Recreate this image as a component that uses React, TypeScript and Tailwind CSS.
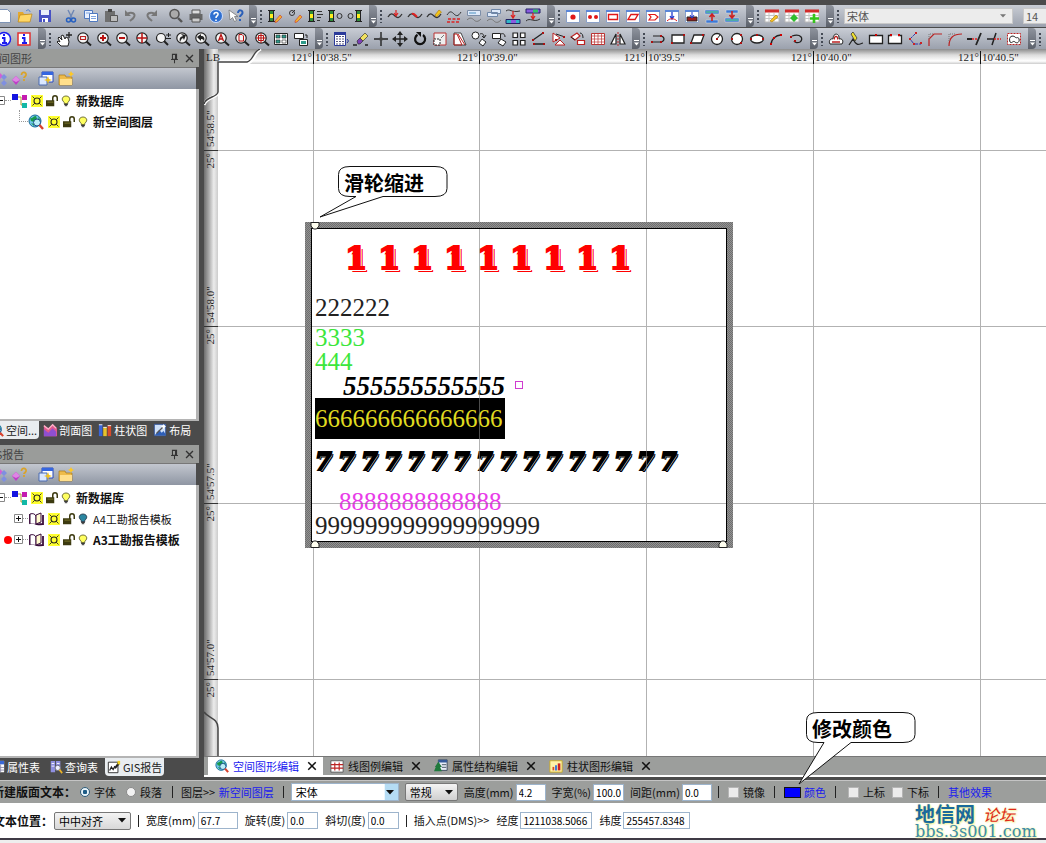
import React, { useState } from 'react';

type Icon = { label: string; art: React.ReactNode };

const Svg = ({ children, className = 'size-4' }: { children: React.ReactNode; className?: string }) => (
    <svg viewBox="0 0 16 16" className={`${className} shrink-0`} fill="none" aria-hidden="true">
        {children}
    </svg>
);

// magnifier shared by all zoom tools
const lens = (inside?: React.ReactNode) => (
    <>
        <path d="M10.5 10.5 15 14.5" stroke="#222" strokeWidth="2" />
        <circle cx="7" cy="7" r="5.2" fill="#f4f4f4" stroke="#222" strokeWidth="1.2" />
        {inside}
    </>
);

// small window frame with a blue title bar
const frame = (inside: React.ReactNode) => (
    <>
        <path d="M1.5 2.5h13v12h-13z" fill="#fff" stroke="#8aa0c8" />
        <path d="M1 2h14v2H1z" fill="#5b86d8" />
        {inside}
    </>
);

const calendar = (inside: React.ReactNode) => (
    <>
        <path d="M1 2h14v12H1z" fill="#fdfdfd" stroke="#b9b9b9" />
        <path d="M1 1.5h14v3H1z" fill="#d22b2b" />
        <path d="M1 7.5h14M1 10.5h14M5 5v9M10 5v9" stroke="#c5c5c5" />
        {inside}
    </>
);

const dots = (pts: number[][], fill = '#a11') =>
    pts.map(([x, y]) => <rect key={`${x}-${y}`} x={x - 1} y={y - 1} width="2" height="2" fill={fill} />);

const pillar = (
    <>
        <path d="M1 2.5h7M1 13.5h7" stroke="#222" />
        <path d="M3 3h3v3H3zM3 10h3v3H3z" fill="#2f8a3a" />
        <path d="M3 6h3v4H3z" fill="#ffee20" />
        <path d="M2.5 3v10M6.5 3v10" stroke="#222" />
    </>
);

const wave = <path d="M1 9c3-5 5-3 7-1s4 3 7-2" stroke="#333" strokeWidth="1.3" />;

const fileTools: Icon[] = [
    { label: '新建', art: <path d="M2.5 1.5h8l3 3v10h-11z" fill="#fff" stroke="#7d93b5" /> },
    { label: '打开', art: <><path d="M1 4h5l1 2h6v8H1z" fill="#e5a92d" /><path d="m3 7 12-1-2 8H1z" fill="#ffd766" stroke="#b98518" strokeWidth=".7" /><path d="M9 3c2-2 4-1 4 1" stroke="#4a7ed0" /></> },
    { label: '保存', art: <><path d="M2 2h12v12H2z" fill="#4751c4" /><path d="M4 2h8v5H4z" fill="#e8edfa" /><path d="M5 10h6v4H5z" fill="#fff" /><path d="M6 11h2v3H6z" fill="#4751c4" /></> },
];

const editTools: Icon[] = [
    { label: '剪切', art: <><path d="m5 2 4 8M11 2 7 10" stroke="#6d86b4" strokeWidth="1.4" /><circle cx="5.5" cy="12" r="2" stroke="#2660c0" strokeWidth="1.5" /><circle cx="10.5" cy="12" r="2" stroke="#2660c0" strokeWidth="1.5" /></> },
    { label: '复制', art: <><path d="M1.5 2.5h8v8h-8z" fill="#e8f0ff" stroke="#4f79c0" /><path d="M6.5 5.5h8v8h-8z" fill="#fff" stroke="#4f79c0" /><path d="M8 8.5h5M8 10.5h5M3 5h4" stroke="#7fa4df" /></> },
    { label: '粘贴', art: <><path d="M2 3h10v11H2z" fill="#6f6f6f" /><path d="M5 1h4v3H5z" fill="#444" /><path d="M7.5 7.5h7v6h-7z" fill="#bbb" stroke="#555" /></> },
    { label: '撤销', art: <><path d="M4 6c5-3 9 0 7 3-1 2-3 3-4 4" stroke="#777" strokeWidth="2" /><path d="M2 2v6h6z" fill="#777" /></> },
    { label: '重做', art: <><path d="M12 6c-5-3-9 0-7 3 1 2 3 3 4 4" stroke="#777" strokeWidth="2" /><path d="M14 2v6H8z" fill="#777" /></> },
];

const printTools: Icon[] = [
    { label: '预览', art: <><circle cx="6.5" cy="6" r="4.5" fill="#aaa" stroke="#555" strokeWidth="1.6" /><path d="m10 10 4 4" stroke="#555" strokeWidth="2.4" /></> },
    { label: '打印', art: <><path d="M4 2h8v4H4z" fill="#ddd" stroke="#555" /><path d="M1.5 6h13v6h-13z" fill="#666" /><path d="M4 10h8v4H4z" fill="#ccc" stroke="#555" /></> },
    { label: '帮助', art: <><circle cx="8" cy="8" r="6.5" fill="#2f6fd0" stroke="#cfe0ff" /><path d="M6 6.5c0-3 4.5-2.5 4 0C9.8 8 8 8 8 10M8 11.5V13" stroke="#fff" strokeWidth="1.6" /></> },
    { label: '这是什么', art: <><path d="m1 2 1 10 2.5-2.5 2 4 2-1-2-4H10z" fill="#fff" stroke="#777" strokeWidth=".8" /><path d="M10 5c0-4 5-3 4.5 0-.3 2-2.5 2-2.5 4M12 11v2" stroke="#2a5fb8" strokeWidth="2" /></> },
];

const pencil = <path d="m8 13 5-6 2 2-5 5-2 .5z" fill="#f0b429" stroke="#c33" strokeWidth=".6" />;

const pillarTools: Icon[] = [
    { label: '钻孔编辑', art: <>{pillar}{pencil}</> },
    { label: '样点编辑', art: <><circle cx="5" cy="5" r="2.5" stroke="#333" /><path d="m5 5 3-3" stroke="#333" />{pencil}</> },
    { label: '分层', art: <>{pillar}<path d="M10 3.5h5M10 6.5h6M10 9.5h4M10 12.5h3" stroke="#333" /></> },
    { label: '钻孔点', art: <>{pillar}<circle cx="12.5" cy="8" r="2.5" stroke="#333" /></> },
    { label: '点钻孔', art: <><circle cx="3.5" cy="8" r="2.5" stroke="#333" /><g transform="translate(7 0)">{pillar}</g></> },
];

const curveTools: Icon[] = [
    { label: '曲线加点', art: <>{wave}<path d="M9 2v6M7 5l2 3 2-3" stroke="#d22" strokeWidth="1.2" /></> },
    { label: '曲线修改', art: <>{wave}<path d="M5 6c2-1 3 1 5 3" stroke="#d22" strokeWidth="2" /></> },
    { label: '曲线绘制', art: <>{wave}<path d="m9 7 4-5 2.5 2-5 5z" fill="#f5c518" stroke="#a70" strokeWidth=".6" /></> },
    { label: '曲线填充', art: <><path d="M1 7c3-5 5-3 7-1s4 3 7-2" stroke="#333" /><path d="M2 11h13M1 14h12" stroke="#d22" strokeDasharray="3 1.5" strokeWidth="1.5" /></> },
    { label: '剖面窗口', art: <><path d="M1.5 2.5h13v5h-13z" fill="#dfeafa" stroke="#7d8ea8" /><path d="M3 5h7" stroke="#4a90c0" /><path d="M1 12c3-3 5-2 7 0s4 2 7-1" stroke="#777" /></> },
    { label: '层叠窗口', art: <><path d="M5.5 1.5h9v4h-9zM1.5 4.5h10v4h-10z" fill="#dfeafa" stroke="#6f87a8" /><path d="M1 13c3-3 5-2 7 0s4 2 7-1" stroke="#777" /></> },
    { label: '曲线到图例', art: <><path d="M1 3c4-3 5 2 14 0" stroke="#333" /><path d="M8 3v7M6 7l2 3 2-3" stroke="#d22" strokeWidth="1.3" /><path d="M1 11.5h14v4H1z" fill="#30b7c8" stroke="#226" /><path d="M6 12h5v3H6z" fill="#8a5be0" /></> },
    { label: '图例到曲线', art: <><path d="M1 1h14v4H1z" fill="#8a5be0" stroke="#226" /><path d="M8 1.5h5v3H8z" fill="#30c768" /><path d="M8 5v7M6 8l2 3 2-3" stroke="#d22" strokeWidth="1.3" /><path d="M1 13c4-4 8 2 14-2" stroke="#333" /></> },
];

const layerTools: Icon[] = [
    { label: '点', art: frame(<circle cx="8" cy="9" r="2.6" fill="#e01818" />) },
    { label: '多点', art: frame(<><circle cx="5" cy="9" r="2" fill="#e01818" /><circle cx="11" cy="9" r="2" fill="#e01818" /></>) },
    { label: '矩形', art: frame(<path d="M3.5 6.5h9v5h-9z" stroke="#e01818" strokeWidth="1.4" />) },
    { label: '平行四边形', art: frame(<path d="M6 6.5h7l-3 5H3z" stroke="#e01818" strokeWidth="1.4" />) },
    { label: '多边形', art: frame(<path d="M4 6.5h6l3 2.5-3 3H4l2-3z" stroke="#e01818" strokeWidth="1.2" />) },
    { label: '投影线', art: frame(<><path d="M8 4v7M6 8l2 3 2-3" stroke="#223ad0" strokeWidth="1.3" /><path d="M3 13c3-3 7-3 10 0" stroke="#e01818" /></>) },
    { label: '投影面', art: frame(<><path d="M3 9h10v4H3z" fill="#9b1c1c" stroke="#222" /><path d="M8 4v6M6 7l2 3 2-3" stroke="#223ad0" /></>) },
    { label: '向上对齐', art: <><path d="M1 2h14v4H1zM2 12h12v3H2z" fill="#3c79d6" stroke="#ddd" strokeWidth=".5" /><path d="M2 4h12" stroke="#5fe07c" /><path d="M8 13V7M5.5 9 8 6l2.5 3" stroke="#c22" strokeWidth="1.6" /></> },
    { label: '向下对齐', art: <><path d="M2 2h12v3H2zM1 10h14v4H1z" fill="#3c79d6" stroke="#ddd" strokeWidth=".5" /><path d="M2 12h12" stroke="#5fe07c" /><path d="M8 3v7M5.5 7 8 10l2.5-3" stroke="#c22" strokeWidth="1.6" /></> },
];

const tableTools: Icon[] = [
    { label: '编辑表', art: calendar(<path d="m6 13 6-6 2 2-6 5z" fill="#f7c325" stroke="#a70" strokeWidth=".6" />) },
    { label: '定位表', art: calendar(<path d="m10 6 4 4-4 4-4-4z" fill="#2fbf2f" />) },
    { label: '添加表', art: calendar(<path d="M10 6v9M6 10.5h9" stroke="#35c41c" strokeWidth="2.6" />) },
];

const infoTools: Icon[] = [
    { label: '信息', art: <><circle cx="8" cy="8" r="6.5" stroke="#1b1bf0" strokeWidth="1.5" fill="#fff" /><path d="M8 3v2M6 7h2.5v5M6 12h5" stroke="#1b1bf0" strokeWidth="2" /></> },
    { label: '属性', art: <><path d="M2 2h12v12H2z" fill="#fff" stroke="#e03030" strokeWidth="1.5" /><path d="M8 3v2M6 7h2.5v5M6 12h5" stroke="#1b1bf0" strokeWidth="2" /></> },
];

const zoomTools: Icon[] = [
    { label: '平移', art: <><path d="M5 15 1 11l1-1 2 1-2-4 1-1 3 3-1-4 2-1 2 4 1-2 2 1 1 4-1 4z" fill="#fff" stroke="#222" /><path d="M10 4h6M13 1v6" stroke="#222" strokeWidth="1.3" /></> },
    { label: '窗口缩放', art: lens(<path d="M4.5 5.5h5v3h-5z" stroke="#b22" strokeWidth="1.2" />) },
    { label: '放大', art: lens(<path d="M4 7h6M7 4v6" stroke="#b11" strokeWidth="2" />) },
    { label: '缩小', art: lens(<path d="M4 7h6" stroke="#b11" strokeWidth="2" />) },
    { label: '全图', art: lens(<path d="M2 7h10M7 2v10" stroke="#b11" strokeWidth="1.5" />) },
    { label: '实时缩放', art: <><circle cx="6" cy="7" r="4.5" fill="#f4f4f4" stroke="#222" strokeWidth="1.2" /><path d="m9 10 4 4" stroke="#222" strokeWidth="2" /><path d="M11 4h5M13.5 2v4M11 7.5h5" stroke="#222" /></> },
    { label: '上一视图', art: lens(<path d="M5 11c-1-4 0-5 3-6L6 3l5 1-2 5-1-2c-2 1-2 2-3 4z" fill="#222" />) },
    { label: '下一视图', art: lens(<path d="M3 6l4-3v2c3 0 4 2 3 5-1-2-2-2-3-2v2z" fill="#222" />) },
    { label: '按字缩放', art: lens(<path d="M4.5 10 7 3.5 9.5 10M5.5 8h3" stroke="#b11" strokeWidth="1.3" />) },
    { label: '页面缩放', art: lens(<path d="M5 3.5h3L9.5 5v5H5z" stroke="#b11" />) },
    { label: '中心缩放', art: lens(<path d="M2 7h10M7 2v10M4.5 4.5h5v5h-5z" stroke="#b11" />) },
    { label: '排列窗口', art: <><path d="M1.5 2.5h13v11h-13z" fill="#fff" stroke="#222" /><path d="M3 4h4v3H3zM9 4h4v3H9zM3 9h4v3H3z" fill="#2e9a8a" stroke="#222" strokeWidth=".6" /><path d="M9 9h4v3H9z" stroke="#222" strokeWidth=".6" /></> },
    { label: '切换窗口', art: <><path d="M1.5 2.5h9v5h-9z" fill="#fff" stroke="#222" /><path d="M6.5 8.5h8v6h-8z" fill="#fff" stroke="#222" /><path d="M8 10h5v3H8z" fill="#2e9a8a" /><path d="M12 4h2v3" stroke="#222" /></> },
];

const modifyTools: Icon[] = [
    { label: '图层表', art: <><path d="M1.5 1.5h11v13h-11z" fill="#fff" stroke="#2b3a9a" /><path d="M1 1h12v3H1z" fill="#2b3a9a" /><path d="M4 5v9M7 5v9M10 5v9" stroke="#225" strokeDasharray="1 1.5" strokeWidth="1.5" /><path d="m14 8 1.5 2-1.5 2" stroke="#2b3a9a" /></> },
    { label: '擦除', art: <><path d="M0 14h4M12 14h3" stroke="#222" strokeWidth="1.4" /><path d="m4 10 3-3 3 3-3 3H5z" fill="#7b3fb5" stroke="#222" strokeWidth=".6" /><path d="m7 7 5-5 3 3-5 5z" fill="#f0e060" stroke="#222" strokeWidth=".6" /></> },
    { label: '定位', art: <><path d="M8 1v14M1 8h14" stroke="#222" strokeWidth="1.4" /><path d="M6.5 6.5h3v3h-3z" fill="#444" /></> },
    { label: '移动', art: <><path d="M8 3v10M3 8h10" stroke="#222" strokeWidth="1.3" /><path d="m8 0 3 4H5zM8 16l3-4H5zM0 8l4-3v6zM16 8l-4-3v6z" fill="#222" /></> },
    { label: '旋转', art: <><path d="M5.5 3.8A5 5 0 1 0 11 4" stroke="#111" strokeWidth="2.2" /><path d="M4 1h5v5z" fill="#111" /></> },
    { label: '比例', art: <><path d="M2 2h12v12H2z" fill="#eee" stroke="#b33" /><path d="M2 8h6v6H2z" fill="#fff" stroke="#222" strokeDasharray="2 1" /><path d="m9 7 3-3" stroke="#777" /></> },
    { label: '斜切', art: <><path d="M2 2h7l5 12H2z" fill="#fff" stroke="#222" strokeWidth=".8" /><path d="M2 14V3h3l5 11zM6 3l7 11" stroke="#b22" /></> },
    { label: '复制圆', art: <><circle cx="4.5" cy="4.5" r="3.5" fill="#fff" stroke="#222" /><path d="m11 8 4 3-3 4-4-3z" fill="#fff" stroke="#222" /><path d="M9 3c2-1 4 0 4 3M11 5l2 2 2-3" stroke="#222" /></> },
    { label: '复制矩形', art: <><path d="M1.5 2.5h8v5h-8z" fill="#fff" stroke="#222" /><path d="m10 8 5 3-3 4-5-3z" fill="#fff" stroke="#222" /><path d="M10 3c2-1 4 0 4 3" stroke="#222" /></> },
    { label: '阵列', art: <path d="M2 2h4.5v4.5H2zM9.5 2H14v4.5H9.5zM2 9.5h4.5V14H2zM9.5 9.5H14V14H9.5z" fill="#fff" stroke="#222" strokeWidth="1.2" /> },
    { label: '角度', art: <><path d="M12 2 2 9M3 13h11" stroke="#222" strokeWidth="1.3" />{dots([[12, 2], [2, 9], [13, 13], [3, 13]])}</> },
    { label: '镜像点', art: <><path d="M2 2v9l7-4zM9 9l5 5H4z" fill="#fff" stroke="#b22" /><path d="m5 3 9 3" stroke="#222" />{dots([[13, 6], [5, 9]])}</> },
    { label: '对齐', art: <><path d="m1 6 6-4 3 3-5 4zM7.5 9.5h7v4h-7z" fill="#fff" stroke="#b22" strokeWidth="1.2" /><path d="M10 2c2 0 3 2 3 5M1 6l4 3" stroke="#222" /></> },
    { label: '网格', art: <><path d="M1.5 2.5h13v11h-13z" fill="#fff" stroke="#b33" /><path d="M1 5h14M1 8h14M1 11h14M4.5 2v12M8 2v12M11.5 2v12" stroke="#b33" strokeWidth=".7" /></> },
    { label: '镜像', art: <><path d="M6 3v10H1zM10 3v10h5z" fill="#fff" stroke="#222" strokeWidth="1.2" /><path d="M8 1v14" stroke="#b22" strokeDasharray="2 1" /></> },
];

const shapeTools: Icon[] = [
    { label: '折线', art: <><path d="M3 5h8c4 1 4 5 0 6H2" stroke="#222" strokeWidth="1.2" />{dots([[11, 5], [2, 11], [11, 11]])}</> },
    { label: '矩形', art: <><path d="M2 4h12v8H2z" fill="#fff" stroke="#222" strokeWidth="1.3" />{dots([[2, 12], [14, 4]])}</> },
    { label: '平行四边形', art: <><path d="M5 4h10l-3 8H2z" fill="#fff" stroke="#222" strokeWidth="1.3" />{dots([[2, 12], [14, 4]])}</> },
    { label: '圆', art: <><circle cx="8" cy="8" r="5.5" fill="#fff" stroke="#222" strokeWidth="1.3" /><path d="m8 8 3-4" stroke="#222" />{dots([[8, 8]])}</> },
    { label: '三点圆', art: <><circle cx="8" cy="8" r="5.5" fill="#fff" stroke="#222" strokeWidth="1.3" />{dots([[3, 8], [12, 4], [12, 12]])}</> },
    { label: '椭圆', art: <><ellipse cx="8" cy="8" rx="6.5" ry="4" fill="#fff" stroke="#222" strokeWidth="1.3" />{dots([[2, 8], [14, 8], [8, 4]])}</> },
    { label: '圆弧', art: <><path d="M3 14c0-6 5-10 10-10" stroke="#222" strokeWidth="1.3" />{dots([[3, 13], [6, 7], [13, 4]], '#c00')}</> },
    { label: '椭圆弧', art: <><path d="M4 5c9-3 12 3 8 6-2 1-5 1-6-1" stroke="#222" strokeWidth="1.3" />{dots([[3, 6], [7, 10]])}</> },
];

const regionTools: Icon[] = [
    { label: '偏移', art: <><path d="M2 13c-2-3 1-6 3-5 0-7 7-6 6 0 3-1 5 2 3 5z" fill="#fff" stroke="#222" /><path d="M4 11h8M6.5 8.5c-1-4 4-4 3 0" stroke="#b22" strokeWidth="1.3" /></> },
    { label: '画笔', art: <><path d="M1 14 5 8c4 8 6 5 10 4" stroke="#222" strokeWidth="1.2" /><path d="m5 1 4 6-2 3-4-7z" fill="#f0e030" stroke="#222" strokeWidth=".7" /></> },
    { label: '闭合', art: <><path d="M1.5 4.5h13v8h-13z" fill="#fff" stroke="#222" strokeWidth="1.3" />{dots([[8, 4]], '#c00')}</> },
    { label: '打开区域', art: <><path d="M5 4.5H1.5v8h13v-8H11" fill="#fff" stroke="#222" strokeWidth="1.3" />{dots([[4, 4], [12, 4]], '#c00')}</> },
    { label: '节点', art: <><path d="M9 2 3 8l4 5h7" stroke="#33a" strokeDasharray="4 1" />{dots([[9, 2], [3, 8], [7, 13], [14, 12]], '#c22')}</> },
    { label: '倒角', art: <><path d="M2 15V8l5-5h8" stroke="#b22" strokeWidth="1.2" /><path d="M2 8V3h5" stroke="#777" strokeDasharray="1 1" /></> },
    { label: '圆角', art: <><path d="M2 15c0-8 4-12 13-12" stroke="#b22" strokeWidth="1.2" /><path d="M2 10V3h7" stroke="#777" strokeDasharray="1 1" /></> },
    { label: '延伸', art: <><path d="M1 8h5M15 2 10 14" stroke="#222" strokeWidth="1.8" /><path d="M6 8h6" stroke="#d22" strokeWidth="1.5" strokeDasharray="2 1" /></> },
    { label: '修剪', art: <><path d="M1 8h7M10 2 6 14" stroke="#222" strokeWidth="1.5" /><path d="M8 8h7" stroke="#d22" strokeWidth="1.5" strokeDasharray="2 1" /></> },
    { label: '选区', art: <><path d="M1.5 2.5h13v11h-13z" stroke="#b22" strokeDasharray="2 1" fill="#fff" /><path d="M4 11c-2-6 3-7 5-5s3-1 4 2-2 5-4 3-3 2-5 0z" stroke="#222" fill="#fff" /></> },
];

const panelTools: Icon[] = [
    { label: '节点', art: <><path d="m6 5 3-3 3 3-3 3z" fill="#d35fd6" /><path d="m10 6 3-3 3 3-3 3zM10 12l3-3 3 3-3 3z" fill="#7f8fe0" /></> },
    { label: '节点帮助', art: <><path d="m1 9 4-4 4 4-4 5z" fill="#c03cc8" /><path d="m1 9 4-4 4 4-4 2z" fill="#de86e4" /><path d="M10.5 4c0-4 5-3 4.5 0-.5 2-2 2-2 3M13 8v2" stroke="#d9a32a" strokeWidth="1.8" /></> },
];

const panelWindowTools: Icon[] = [
    { label: '图层属性', art: <><path d="M4 1h11v10H4z" fill="#fff" stroke="#2747b8" /><path d="M4 1h11v3H4z" fill="#3566e0" /><path d="M1 6h8v8H1z" fill="#dbe8ff" stroke="#4a6ab0" /><path d="m10 5 1 3 3 1-3 1-1 3-1-3-3-1 3-1z" fill="#f0c020" /></> },
    { label: '新建文件夹', art: <><path d="M1 4h6l1 2h6v8H1z" fill="#eebb4a" stroke="#a8781a" strokeWidth=".7" /><path d="M2 8h12v6H2z" fill="#ffdf8c" /><path d="m13 0 1 2 2 1-2 1-1 2-1-2-2-1 2-1z" fill="#ffc821" /></> },
];

const globe = (
    <>
        <circle cx="7" cy="7" r="6" fill="#6fc5e8" stroke="#176b9a" />
        <path d="M2 4c3 1 3-2 6-2l1 3-3 3-3-1zM3 9l3 1v2zM10 3l2 2-1 2z" fill="#189a4a" />
        <circle cx="9" cy="8.5" r="3.5" stroke="#184f8c" fill="#dff" fillOpacity=".7" />
        <path d="m11.5 11 3.5 4" stroke="#d8422e" strokeWidth="2.4" />
    </>
);

const treeArt = <><path d="M1 1h6v6H1z" fill="#1414e0" /><path d="M7 4h3v8h2" stroke="#a93" /><path d="M11 2h5v5h-5z" fill="#c41bb0" /><path d="M11 10h5v5h-5z" fill="#13b8a6" /></>;
const bookArt = <><path d="M2 3v9c3-1 4 0 6 1 2 1 4 0 7 0V4" fill="#fff" stroke="#3a0d3c" strokeWidth="1.8" /><path d="M2 12V3c3-1 5 0 6 2v8" fill="#fff" stroke="#3a0d3c" /><path d="M8 13V4l5-2v9z" fill="#fffbd0" stroke="#3a0d3c" /></>;
const sunArt = <><path d="M0 0h16v16H0z" fill="#ffff30" /><circle cx="8" cy="8" r="4" stroke="#332" strokeWidth="1.5" /><path d="m2 2 3 3M14 2l-3 3M2 14l3-3M14 14l-3-3" stroke="#332" strokeWidth="1.3" /></>;
const lockArt = <><path d="M0 7h11v8H0z" fill="#3c3a10" /><path d="M9 8V4c0-4 6-4 6 0v4" stroke="#3c3a10" strokeWidth="2" /><path d="M2 9.5h8" stroke="#8a8430" /></>;
const bulbArt = (on: boolean) => <><path d="M5 10C-1 5 3 0 8 0s9 5 3 10v2H5z" fill={on ? '#ffff60' : '#2b86a0'} stroke={on ? '#555522' : '#234'} strokeWidth="1.3" /><path d="M5 13.5h6M6 15.5h4" stroke="#222" strokeWidth="1.5" /></>;

const IconButton = ({ icon }: { icon: Icon }) => (
    <button type="button" aria-label={icon.label} title={icon.label} className="size-4 shrink-0">
        <Svg>{icon.art}</Svg>
    </button>
);

const Grip = () => (
    <svg viewBox="0 0 4 16" className="mx-[2px] h-4 w-1 shrink-0" aria-hidden="true">
        <path d="M1 2h2v2H1zM1 6h2v2H1zM1 10h2v2H1zM1 14h2v1H1z" fill="#444a55" />
    </svg>
);

const Chip = () => (
    <button type="button" aria-label="更多" className="flex h-full w-2 shrink-0 items-end justify-center rounded-r bg-linear-to-b from-[#8f949e] to-[#5c616b] pb-[3px]">
        <svg viewBox="0 0 6 6" className="size-[6px]"><path d="M1 .5h5" stroke="#fff" /><path d="M1 2.5h5l-2.5 3z" fill="#fff" /></svg>
    </button>
);

const Rule = () => <span className="h-3 w-px shrink-0 bg-[#5f646e]" />;

const ToolGroup = ({ icons, width }: { icons: Icon[]; width: string }) => (
    <div className={`flex h-full shrink-0 items-center ${width}`}>
        <Grip />
        <div className="flex flex-1 items-center justify-between pr-[6px] pl-[2px]">
            {icons.map((icon) => <IconButton key={icon.label} icon={icon} />)}
        </div>
        <Chip />
    </div>
);

const PanelHead = ({ title, shift }: { title: string; shift: string }) => (
    <>
        <div className="flex h-[18px] shrink-0 items-center justify-between overflow-hidden bg-[#9a9c9a] pr-1 text-[11px] text-[#444]">
            <h2 className={shift}>{title}</h2>
            <div className="flex gap-1">
                <button type="button" aria-label="固定"><Svg className="size-[11px]"><path d="M5 2h6v7H5zM3 9.5h10M8 10v5M9.5 2v7" stroke="#333" strokeWidth="1.5" /></Svg></button>
                <button type="button" aria-label="关闭"><Svg className="size-[11px]"><path d="m3 3 10 10M13 3 3 13" stroke="#333" strokeWidth="2" /></Svg></button>
            </div>
        </div>
        <div className="mr-[3px] flex h-[22px] shrink-0 items-center gap-1 overflow-hidden border-t border-[#777] bg-linear-to-b from-[#c3c7cf] to-[#8f96a3]">
            <div className="-ml-[9px] flex gap-1">{panelTools.map((icon) => <IconButton key={icon.label} icon={icon} />)}</div>
            <span className="mr-[2px] ml-px"><Rule /></span>
            {panelWindowTools.map((icon) => <IconButton key={icon.label} icon={icon} />)}
        </div>
    </>
);

const Expander = ({ open }: { open?: boolean }) => (
    <button type="button" aria-label={open ? '折叠' : '展开'} className="shrink-0">
        <svg viewBox="0 0 9 9" className="size-[9px]"><path d="M.5.5h8v8h-8z" fill="#fff" stroke="#888" /><path d={open ? 'M2 4.5h5' : 'M2 4.5h5M4.5 2v5'} stroke="#111" /></svg>
    </button>
);

const Dash = () => <span className="flex-1 border-t border-dotted border-[#999]" />;

const TreeRow = ({ lead, leadWidth, art, label, bold, on = true }: { lead: React.ReactNode; leadWidth: string; art: React.ReactNode; label: string; bold?: boolean; on?: boolean }) => (
    <li className="flex h-[21px] items-center gap-[3px] text-xs whitespace-nowrap">
        <span className={`-mr-[3px] flex shrink-0 items-center ${leadWidth}`}>{lead}</span>
        <Svg>{art}</Svg>
        <Svg className="ml-px size-3">{sunArt}</Svg>
        <Svg className="size-3">{lockArt}</Svg>
        <Svg className="h-3 w-[10px]">{bulbArt(on)}</Svg>
        <span className={bold ? 'ml-[2px] font-bold' : 'ml-[2px] text-[11px]'}>{label}</span>
    </li>
);

type Tab = { label: string; art: React.ReactNode };

const SideTabs = ({ tabs, active, spacing }: { tabs: Tab[]; active: number; spacing: string }) => (
    <div className={`flex h-[22px] shrink-0 items-start bg-[#4b4b4b] text-[11px] ${spacing}`}>
        {tabs.map((tab, i) => (
            <button
                key={tab.label}
                type="button"
                className={i === active ? 'flex h-[18px] items-center gap-[2px] rounded-b-sm bg-[#e9edf0] px-[2px] text-[#222]' : 'flex h-[18px] items-center gap-[2px] px-[2px] text-white'}
            >
                <Svg className="size-[14px]">{tab.art}</Svg>
                {tab.label}
            </button>
        ))}
    </div>
);

const upperTabs: Tab[] = [
    { label: '空间...', art: globe },
    { label: '剖面图', art: <><path d="M1 3l5 3 5-4 5 4v9H1z" fill="#e05a8f" /><path d="m1 7 5 4 5-5 4 4v5H1z" fill="#8f4fd0" /><path d="m1 3 5 4 5-5 4 4" stroke="#ffb0c8" strokeWidth="1.5" /></> },
    { label: '柱状图', art: <><path d="M1 2h4v13H1z" fill="#3a66d8" /><path d="M6 5h4v10H6z" fill="#e8c22a" /><path d="M11 3h4v12h-4z" fill="#d84a2a" /><path d="M1 2h4M6 5h4M11 3h4" stroke="#fff" /></> },
    { label: '布局', art: <><path d="M1.5 1.5h13v13h-13z" fill="#cfe0f8" stroke="#2c4f9a" /><path d="m2 14 5-6 3 3 2-2 3 5z" fill="#2d5fb8" /><path d="m4 12 8-8" stroke="#555" strokeWidth="1.5" /><path d="m12 1 1 2 2 1-2 1-1 2-1-2-2-1 2-1z" fill="#fff" /></> },
];

const lowerTabs: Tab[] = [
    { label: '属性表', art: <><path d="M1 1h14v13H1z" fill="#fff" /><path d="M1 1h14v4H1z" fill="#3867d6" /><path d="M1 8.5h14M1 11.5h14M6 5v9M11 5v9" stroke="#88a" /></> },
    { label: '查询表', art: <><path d="M2 1h5v13H2zM8 1h5v9H8z" fill="#8f8fe0" /><path d="M3 4h3M3 7h3M9 4h3" stroke="#fff" /><circle cx="10" cy="9" r="3" fill="#eef" stroke="#667" /><path d="m12 11 3 4" stroke="#e8b22a" strokeWidth="2" /></> },
    { label: 'GIS报告', art: <><path d="M1.5 2.5h11v12h-11z" fill="#fff" stroke="#222" /><path d="m3 12 2-4 2 3 2-4" stroke="#222" strokeWidth="1.3" /><path d="m8 9 5-7 2 2-5 6z" fill="#222" /><path d="M12 1h3v4h-3z" fill="#f0d020" /></> },
];

const docTabs: Tab[] = [
    { label: '空间图形编辑', art: globe },
    { label: '线图例编辑', art: <><path d="M1 2h14v13H1z" fill="#fff" stroke="#555" /><path d="M1 6.5h14M1 10.5h14M5.5 4v9M10.5 4v9" stroke="#b22" strokeWidth="1.3" /></> },
    { label: '属性结构编辑', art: <><path d="M5 1h10v12H5z" fill="#e8eef8" stroke="#345" /><path d="M5 1h10v3H5z" fill="#345a9a" /><path d="M9 6.5h5M9 9.5h5" stroke="#345" /><path d="m5 3 4 6H7l2 5H0l2-5H1z" fill="#1f7a3c" /></> },
    { label: '柱状图形编辑', art: <><path d="M1 2h14v13H1z" fill="#fff3a8" stroke="#c9a820" /><path d="M4 9h2v4H4z" fill="#d84a2a" /><path d="M7 7h2v6H7z" fill="#2a6ad8" /><path d="M10 5h3v8h-3z" fill="#c22" /></> },
];

// graticule inside the workspace: one line every half second
const meridians = [
    { x: 109, s: "10'38.5\"" }, { x: 275, s: "10'39.0\"" }, { x: 442, s: "10'39.5\"" }, { x: 609, s: "10'40.0\"" }, { x: 776, s: "10'40.5\"" },
];
const parallels = [
    { y: 101, s: "54'58.5\"" }, { y: 277, s: "54'58.0\"" }, { y: 454, s: "54'57.5\"" }, { y: 630, s: "54'57.0\"" },
];

const Graticule = () => (
    <svg className="absolute inset-0 size-full overflow-hidden" shapeRendering="crispEdges">
        <defs>
            <linearGradient id="side"><stop offset="0" stopColor="#6e6e6e" /><stop offset=".35" stopColor="#aaa" /><stop offset=".7" stopColor="#ececec" /><stop offset="1" stopColor="#ccc" /></linearGradient>
            <linearGradient id="top" x2="0" y2="1"><stop offset="0" stopColor="#8c8c8c" /><stop offset=".4" stopColor="#dcdcdc" /><stop offset=".8" stopColor="#fff" /><stop offset="1" stopColor="#ccc" /></linearGradient>
        </defs>
        <rect width="100%" height="15" fill="url(#top)" />
        <rect width="14" height="100%" fill="url(#side)" />
        {meridians.map((m) => <line key={m.x} x1={m.x + 0.5} x2={m.x + 0.5} y1="14" y2="100%" stroke="#b2b2b2" />)}
        {parallels.map((p) => <line key={p.y} x1="14" x2="100%" y1={p.y + 0.5} y2={p.y + 0.5} stroke="#b2b2b2" />)}
        <g shapeRendering="auto" fill="none">
            <path d="M57 0c-7 2-6 12-13 14H15v29c-1 6-13 4-15 13" stroke="#fff" strokeWidth="3" />
            <path d="M56 0c-7 2-6 11-13 13H14v30c-1 6-12 4-14 12" stroke="#444" strokeWidth="1.5" />
            <path d="M0 663c4 6 14 6 14 16v30" stroke="#444" strokeWidth="1.5" />
        </g>
        <g fontFamily="Liberation Serif, serif" fontSize="11" fill="#222">
            <text x="2" y="12">LB</text>
            {meridians.map((m) => (
                <g key={m.x}>
                    <text x={m.x - 1} y="12" textAnchor="end">121°</text>
                    <path d={`M${m.x + 0.5} 2v13`} stroke="#111" />
                    <text x={m.x + 2} y="12">{m.s}</text>
                </g>
            ))}
            {parallels.map((p) => (
                <g key={p.y}>
                    <text transform={`translate(10 ${p.y + 3}) rotate(-90)`} textAnchor="end">25°</text>
                    <path d={`M0 ${p.y + 0.5}h14`} stroke="#333" />
                    <text transform={`translate(10 ${p.y - 3}) rotate(-90)`}>{p.s}</text>
                </g>
            ))}
        </g>
    </svg>
);

const Handle = ({ place, up }: { place: string; up?: boolean }) => (
    <svg viewBox="0 0 10 8" className={`absolute h-2 w-[10px] ${place}`}>
        <path d={up ? 'M1 7.5V4l2.5-3h3L9 4v3.5z' : 'M1 .5V4l2.5 3h3L9 4V.5z'} fill="#fffff0" stroke="#222" />
    </svg>
);

// wide display digits sit in equal cells
const Cells = ({ text, cell }: { text: string; cell: string }) => (
    <>{text.split('').map((c, i) => <span key={i} className={`shrink-0 ${cell}`}>{c}</span>)}</>
);

const TextFrame = () => (
    <div className="absolute top-[173px] left-[101px] w-[428px] bg-[repeating-conic-gradient(#6f6f6f_0_25%,#929292_0_50%)] bg-[length:2px_2px] p-[6px]">
        <div className="border border-black bg-white">
            <div className="relative h-[312px] overflow-hidden pt-px pl-[3px] font-['Liberation_Serif',serif] text-[25px] leading-6 text-[#222]">
                <p className="mb-[10px] flex pl-[30px] font-['DejaVu_Serif',serif] text-[32px] leading-14 font-bold text-[#f00] [-webkit-text-stroke:2px_#f00] [text-shadow:1px_1px_#fff,2px_2px_#fff,3px_3px_#f00]"><Cells text="111111111" cell="w-[33px]" /></p>
                <p className="mb-[6px]">222222</p>
                <p className="text-[#3ce63c]">3333</p>
                <p className="text-[#3ce63c]">444</p>
                <p className="pl-7 text-[27px] font-bold text-black italic">555555555555</p>
                <p className="w-fit bg-black pt-[9px] pr-[2px] pb-2 text-[#e0dc20]">666666666666666</p>
                <p className="mb-[5px] flex font-['DejaVu_Serif',serif] text-2xl leading-[46px] font-bold text-black italic [-webkit-text-stroke:2px_#000] [text-shadow:1px_1px_#fff,2px_2px_#000]"><Cells text="7777777777777777" cell="w-[23px]" /></p>
                <p className="pl-6 text-[#e83ce8]">8888888888888</p>
                <p>999999999999999999</p>
                <svg className="pointer-events-none absolute inset-0 size-full" shapeRendering="crispEdges">
                    <path d="M167.5 0v312M334.5 0v312M0 97.5h416M0 274.5h416" stroke="#808080" strokeOpacity=".6" />
                    <path d="M203.5 152.5h7v7h-7z" fill="#fff" stroke="#d03cd0" />
                </svg>
            </div>
        </div>
        <Handle place="top-0 left-[5px]" />
        <Handle place="bottom-0 left-[5px]" up />
        <Handle place="right-[5px] bottom-0" up />
    </div>
);

const Callout = ({ text, place, tail }: { text: string; place: string; tail: string }) => (
    <div className={`absolute z-10 h-8 w-[110px] ${place}`}>
        <svg className="absolute inset-0 size-full overflow-visible">
            <path d={tail} fill="#fff" stroke="#111" />
        </svg>
        <p className="relative pl-[6px] text-[20px] leading-[34px] font-bold text-black">{text}</p>
    </div>
);

const Field = ({ id, label, value, width }: { id: string; label: string; value: string; width: string }) => (
    <div className="flex shrink-0 items-center gap-[2px]">
        <label htmlFor={id}>{label}</label>
        <input id={id} defaultValue={value} className={`h-[17px] border border-[#9db4cc] bg-white px-[2px] text-[10px] text-black ${width}`} />
    </div>
);

const Choice = ({ label, options, width, tone }: { label: string; options: string[]; width: string; tone: string }) => (
    <div className={`grid h-[18px] shrink-0 grid-cols-[1fr_12px] items-center border ${width} ${tone}`}>
        <select aria-label={label} className="col-span-2 col-start-1 row-start-1 h-full w-full appearance-none pl-1 text-[11px] leading-4 text-black">
            {options.map((o) => <option key={o}>{o}</option>)}
        </select>
        <svg viewBox="0 0 8 5" className="pointer-events-none col-start-2 row-start-1 h-[5px] w-2"><path d="M0 0h8L4 4.5z" fill="#111" /></svg>
    </div>
);

const Bar = () => <span className="h-3 w-px shrink-0 bg-[#222]" />;

const Tick = ({ label }: { label: string }) => (
    <label className="flex shrink-0 items-center gap-1">
        <input type="checkbox" className="size-[11px] appearance-none border border-[#b5b5b5] bg-[#ececec] checked:bg-[#3c6fd0]" />
        {label}
    </label>
);

const Radio = ({ label, checked, onChange }: { label: string; checked: boolean; onChange: () => void }) => (
    <label className="flex shrink-0 items-center gap-1">
        <input
            type="radio"
            name="mode"
            checked={checked}
            onChange={onChange}
            className="size-[10px] appearance-none rounded-full border border-[#8a8a8a] bg-[#f2f2f2] checked:border-[#2c5a78] checked:bg-[radial-gradient(#1d5c86_0_35%,#e8f4fa_45%)]"
        />
        {label}
    </label>
);

const App = () => {
    const [mode, setMode] = useState('字体');
    const [doc, setDoc] = useState(0);

    return (
        <div className="flex h-screen flex-col overflow-hidden bg-[#4b4b4b] font-['Noto_Sans_CJK_SC',sans-serif] text-[11px] text-[#111]">
            {/* Toolbars */}
            <header className="shrink-0 overflow-hidden pt-[5px]">
                <div className="mb-px flex h-[22px] items-center bg-linear-to-b from-[#c9cdd5] to-[#9ba1ad]">
                    <div className="flex h-full w-[257px] shrink-0 items-center">
                        <div className="-ml-[3px] flex gap-1">{fileTools.map((icon) => <IconButton key={icon.label} icon={icon} />)}</div>
                        <span className="ml-[4px]"><Rule /></span>
                        <div className="ml-[6px] flex gap-1">{editTools.map((icon) => <IconButton key={icon.label} icon={icon} />)}</div>
                        <span className="ml-[4px]"><Rule /></span>
                        <div className="mr-auto ml-[5px] flex gap-1">{printTools.map((icon) => <IconButton key={icon.label} icon={icon} />)}</div>
                        <Chip />
                    </div>
                    <ToolGroup icons={pillarTools} width="w-[120px]" />
                    <ToolGroup icons={curveTools} width="w-[178px]" />
                    <ToolGroup icons={layerTools} width="w-[199px]" />
                    <ToolGroup icons={tableTools} width="w-[80px]" />
                    <Grip />
                    <div className="ml-[2px] grid h-4 w-[169px] shrink-0 grid-cols-[1fr_12px] items-center border border-[#c9c9c9] bg-[#ececec]">
                        <select aria-label="字体名称" className="col-span-2 col-start-1 row-start-1 h-full appearance-none pl-[2px] text-[11px] leading-[14px] text-[#555]">
                            <option>宋体</option>
                        </select>
                        <svg viewBox="0 0 8 5" className="pointer-events-none col-start-2 row-start-1 h-1 w-[6px]"><path d="M0 0h8L4 4.5z" fill="#777" /></svg>
                    </div>
                    <span className="mx-[5px]"><Rule /></span>
                    <input aria-label="字号" defaultValue="14" className="h-4 w-12 shrink-0 border border-[#c9c9c9] bg-[#ececec] px-[2px] text-[11px] text-[#555]" />
                </div>
                <div className="flex h-[21px] items-center bg-linear-to-b from-[#c9cdd5] to-[#9ba1ad]">
                    <div className="flex h-full w-[46px] shrink-0 items-center justify-between">
                        <div className="-ml-1 flex gap-1">{infoTools.map((icon) => <IconButton key={icon.label} icon={icon} />)}</div>
                        <Chip />
                    </div>
                    <ToolGroup icons={zoomTools} width="w-[277px]" />
                    <ToolGroup icons={modifyTools} width="w-[317px]" />
                    <ToolGroup icons={shapeTools} width="w-[178px]" />
                    <ToolGroup icons={regionTools} width="w-[218px]" />
                    <Grip />
                </div>
            </header>

            <div className="flex min-h-0 flex-1">
                {/* Side panels */}
                <aside className="flex w-[199px] shrink-0 flex-col overflow-hidden">
                    <PanelHead title="空间图形" shift="-ml-3" />
                    <ul className="min-h-0 flex-[331] border-r-[3px] border-b-2 border-[#b4b4b4] bg-white pt-px">
                        <TreeRow lead={<><span className="-ml-1 flex"><Expander open /></span><Dash /></>} leadWidth="w-[11px]" art={treeArt} label="新数据库" bold />
                        <TreeRow lead={<span className="ml-[19px] h-3 flex-1 -translate-y-[6px] border-b border-l border-dotted border-[#999]" />} leadWidth="w-7" art={globe} label="新空间图层" bold />
                    </ul>
                    <SideTabs tabs={upperTabs} active={0} spacing="-ml-3 gap-[2px]" />
                    <div className="h-[2px] shrink-0" />
                    <PanelHead title="GIS报告" shift="-ml-[15px]" />
                    <ul className="min-h-0 flex-[270] border-r-[3px] border-b-2 border-[#b4b4b4] bg-white pt-[2px]">
                        <TreeRow lead={<><span className="-ml-1 flex"><Expander open /></span><Dash /></>} leadWidth="w-[11px]" art={treeArt} label="新数据库" bold />
                        <TreeRow lead={<><span className="ml-[14px] flex"><Expander /></span><Dash /></>} leadWidth="w-7" art={bookArt} label="A4工勘报告模板" on={false} />
                        <TreeRow lead={<><span className="mr-[2px] ml-1 size-2 rounded-full bg-[#f00]" /><Expander /><Dash /></>} leadWidth="w-7" art={bookArt} label="A3工勘报告模板" bold />
                    </ul>
                    <SideTabs tabs={lowerTabs} active={2} spacing="-ml-[11px] gap-[5px]" />
                </aside>

                {/* Workspace */}
                <main className="ml-[5px] flex min-w-0 flex-1 flex-col">
                    <div className="relative min-h-0 flex-1 bg-white">
                        <Graticule />
                        <TextFrame />
                        <Callout
                            text="滑轮缩进"
                            place="top-[117px] left-[134px]"
                            tail="M12 .5H97q12 0 12 8v14q0 8-12 8H45L-18 51 18 30.5H12Q.5 30.5.5 22.5v-14q0-8 11.5-8z"
                        />
                        <Callout
                            text="修改颜色"
                            place="top-[663px] left-[602px]"
                            tail="M12 .5H97q12 0 12 8v14q0 8-12 8H45L-7 72 18 30.5H12Q.5 30.5.5 22.5v-14q0-8 11.5-8z"
                        />
                    </div>
                    <nav className="flex h-[19px] shrink-0 items-center border-t border-[#777] bg-[#9c9e9c] pl-1">
                        {docTabs.map((tab, i) => (
                            <div key={tab.label} className={i === doc ? 'flex h-full items-center bg-white pr-1 pl-[7px] text-[#1a1af0]' : 'flex h-full items-center pr-1 pl-[7px] text-[#111]'}>
                                <button type="button" onClick={() => setDoc(i)} className="flex items-center gap-1">
                                    <Svg className="size-[14px]">{tab.art}</Svg>
                                    {tab.label}
                                </button>
                                <button type="button" aria-label={`关闭${tab.label}`} className="ml-[6px] p-[2px]">
                                    <Svg className="size-[10px]"><path d="m2 2 12 12M14 2 2 14" stroke="#111" strokeWidth="2.4" /></Svg>
                                </button>
                            </div>
                        ))}
                    </nav>
                    <div className="h-[5px] shrink-0 border-t-2 border-white bg-[#4b4b4b]" />
                </main>
            </div>

            {/* Text properties */}
            <footer className="relative shrink-0 overflow-hidden bg-white whitespace-nowrap">
                <div className="flex h-[23px] items-center border-t border-[#c4c4c4] bg-[#9c9e9c]">
                    <strong className="-ml-2 w-[88px] shrink-0 text-xs">新建版面文本：</strong>
                    <div className="flex items-center gap-[10px]">
                        <Radio label="字体" checked={mode === '字体'} onChange={() => setMode('字体')} />
                        <Radio label="段落" checked={mode === '段落'} onChange={() => setMode('段落')} />
                        <Bar />
                        <span className="-ml-[2px]">图层&gt;&gt; <a href="#layer" className="ml-px text-[#1a1af0]">新空间图层</a></span>
                    </div>
                    <span className="mr-[7px] ml-[9px] flex"><Bar /></span>
                    <div className="flex items-center gap-[6px]">
                        <Choice label="字体" options={['宋体']} width="w-[108px]" tone="bg-linear-to-r from-white from-87% to-[#b5dcf4] to-88% border-[#9db4cc]" />
                        <Choice label="字形" options={['常规']} width="w-[53px]" tone="bg-linear-to-b from-[#f4f4f4] to-[#d0d0d0] border-[#777] rounded-xs" />
                        <Field id="height" label="高度(mm)" value="4.2" width="w-[30px]" />
                        <Field id="ratio" label="字宽(%)" value="100.0" width="w-[31px]" />
                        <Field id="space" label="间距(mm)" value="0.0" width="w-[30px]" />
                    </div>
                    <div className="flex items-center gap-[9px] pl-[6px]">
                        <Bar />
                        <Tick label="镜像" />
                        <Bar />
                        <button type="button" className="flex items-center gap-[3px] text-[#1a1af0]">
                            <span className="h-[11px] w-[17px] border border-[#111] bg-[#00f]" />颜色
                        </button>
                        <Bar />
                        <div className="flex gap-[7px] pl-[3px]">
                            <Tick label="上标" />
                            <Tick label="下标" />
                        </div>
                        <Bar />
                        <a href="#effects" className="text-[#1a1af0]">其他效果</a>
                    </div>
                </div>
                <div className="flex h-[35px] items-center gap-[7px]">
                    <strong className="-ml-[7px] w-[54px] shrink-0 text-xs">文本位置：</strong>
                    <Choice label="文本位置" options={['中中对齐']} width="w-[77px]" tone="bg-linear-to-b from-[#f4f4f4] to-[#d8d8d8] border-[#777] rounded-xs" />
                    <Bar />
                    <Field id="w" label="宽度(mm)" value="67.7" width="w-10" />
                    <Field id="rot" label="旋转(度)" value="0.0" width="w-[31px]" />
                    <Field id="skew" label="斜切(度)" value="0.0" width="w-[31px]" />
                    <Bar />
                    <span>插入点(DMS)&gt;&gt;</span>
                    <Field id="lon" label="经度" value="1211038.5066" width="w-[72px]" />
                    <Field id="lat" label="纬度" value="255457.8348" width="w-[67px]" />
                </div>
                <div className="h-[5px] border-t-2 border-[#3f3a45] bg-[#eee]" />
                <div className="absolute top-[25px] left-[915px] [text-shadow:0_0_2px_#f2f29a,1px_1px_2px_#f2f29a]">
                    <p className="flex items-center gap-2 leading-[18px]"><span className="text-[20px] font-bold text-[#1a6a9c]">地信网</span><span className="text-[16px] text-[#e02818] italic">论坛</span></p>
                    <p className="font-['DejaVu_Serif',serif] text-[16px] leading-[17px] text-[#3c8cac]">bbs.3s001.com</p>
                </div>
            </footer>
        </div>
    );
};

export default App;
